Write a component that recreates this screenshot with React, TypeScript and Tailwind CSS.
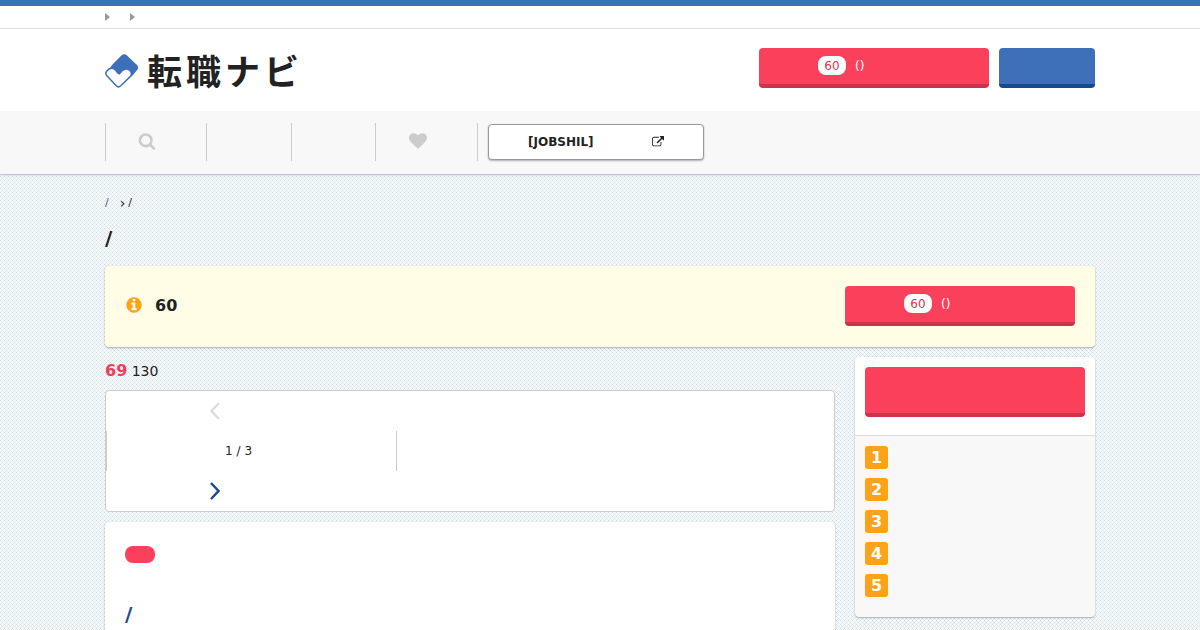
import type { ReactNode } from "react";

function Glyph({ d, className }: { d: string; className: string }) {
  return (
    <svg viewBox="0 0 1792 1792" className={className} fill="currentColor" aria-hidden="true">
      <path d={d} />
    </svg>
  );
}

const SEARCH =
  "M1216 832q0-185-131.5-316.5t-316.5-131.5-316.5 131.5-131.5 316.5 131.5 316.5 316.5 131.5 316.5-131.5 131.5-316.5zm512 832q0 52-38 90t-90 38q-54 0-90-38l-343-342q-179 124-399 124-143 0-273.5-55.5t-225-150-150-225-55.5-273.5 55.5-273.5 150-225 225-150 273.5-55.5 273.5 55.5 225 150 150 225 55.5 273.5q0 220-124 399l343 343q37 37 37 90z";
const HEART =
  "M896 1664q-26 0-44-18l-624-602q-10-8-27.5-26t-55.5-65.5-68-97.5-53.5-121-23.5-138q0-220 127-344t351-124q62 0 126.5 21.5t120 58 95.5 68.5 76 68q36-36 76-68t95.5-68.5 120-58 126.5-21.5q224 0 351 124t127 344q0 221-229 450l-623 600q-18 18-44 18z";
const EXTERNAL =
  "M1408 928v320q0 119-84.5 203.5t-203.5 84.5h-832q-119 0-203.5-84.5t-84.5-203.5v-832q0-119 84.5-203.5t203.5-84.5h704q14 0 23 9t9 23v64q0 14-9 23t-23 9h-704q-66 0-113 47t-47 113v832q0 66 47 113t113 47h832q66 0 113-47t47-113v-320q0-14 9-23t23-9h64q14 0 23 9t9 23zm384-864v512q0 26-19 45t-45 19-45-19l-176-176-652 652q-10 10-23 10t-23-10l-114-114q-10-10-10-23t10-23l652-652-176-176q-19-19-19-45t19-45 45-19h512q26 0 45 19t19 45z";
const INFO =
  "M1152 1376v-160q0-14-9-23t-23-9h-96v-512q0-14-9-23t-23-9h-320q-14 0-23 9t-9 23v160q0 14 9 23t23 9h96v320h-96q-14 0-23 9t-9 23v160q0 14 9 23t23 9h448q14 0 23-9t9-23zm-128-896v-160q0-14-9-23t-23-9h-192q-14 0-23 9t-9 23v160q0 14 9 23t23 9h192q14 0 23-9t9-23zm640 416q0 209-103 385.5t-279.5 279.5-385.5 103-385.5-103-279.5-279.5-103-385.5 103-385.5 279.5-279.5 385.5-103 385.5 103 279.5 279.5 103 385.5z";

function Container({ children, className = "" }: { children: ReactNode; className?: string }) {
  return <div className={`mx-auto w-full max-w-[990px] ${className}`}>{children}</div>;
}

function Caret() {
  return (
    <svg viewBox="0 0 5 8" className="h-2 w-[5px]" fill="#999" aria-hidden="true">
      <path d="M0 0 5 4 0 8z" />
    </svg>
  );
}

function RegisterButton() {
  return (
    <a
      href="#register"
      aria-label="会員登録"
      className="flex h-10 w-[230px] items-start rounded border-b-4 border-[#cb344c] bg-[#fb405b] pt-2 pl-[59px] text-xs text-white"
    >
      <span className="w-7 rounded-lg bg-white pt-px text-center leading-[18px] text-[#d5364e]">60</span>
      <span className="ml-[9px] pt-px leading-[18px]">()</span>
    </a>
  );
}

function LogoMark() {
  return (
    <svg viewBox="0 0 34 34" className="size-[34px]" aria-hidden="true">
      <path
        d="M16.4 1.6Q19.2-.9 22 1.6L32 11Q34.2 13.6 32.2 16L26.6 22.5 14 20 4.6 14.4 7 11z"
        fill="#3e70b9"
      />
      <path
        d="M1.7 17.3Q-.1 19.3 1.7 21.6L11.2 31.8Q13.5 33.9 15.8 31.8L25.4 22.4Q27.4 19.7 25.4 17Q23 14.3 19.6 15.4Q16.6 16.6 14.4 19.9Q12.3 19.2 11.4 17.2Q9.8 14.4 6.8 14Q4 14.4 1.7 17.3z"
        fill="#fff"
        stroke="#3e70b9"
        strokeWidth="1.5"
      />
    </svg>
  );
}

function Angle({ d, className }: { d: string; className: string }) {
  return (
    <svg viewBox="0 0 10 18" className={className} fill="none" stroke="currentColor" strokeWidth="2.4" aria-hidden="true">
      <path d={d} />
    </svg>
  );
}

export default function App() {
  return (
    <div className="min-h-screen bg-[#f7fafc] bg-[conic-gradient(from_270deg_at_1px_1px,#cbd9e2_90deg,transparent_0),conic-gradient(from_270deg_at_1px_1px,#d3e0e8_90deg,transparent_0),conic-gradient(from_270deg_at_1px_1px,#e3ecf2_90deg,transparent_0)] bg-[length:4px_4px,4px_4px,2px_2px] bg-[position:0_0,2px_2px,1px_1px] font-['DejaVu_Sans','Noto_Sans_CJK_JP',sans-serif] text-[#222]">
      <header className="border-b border-[#b9c5dc] bg-white shadow-[0_1px_2px_rgba(0,0,0,0.08)]">
        <div className="border-t-[6px] border-b border-t-[#3e70b9] border-b-[#ddd]">
          <Container className="flex h-[22px] items-center gap-5">
            <Caret />
            <Caret />
          </Container>
        </div>
        <Container className="flex h-[82px] items-start justify-between">
          <a href="#home" className="flex items-start pt-[25px]">
            <LogoMark />
            <span className="ml-2 flex gap-1 font-['Noto_Sans_CJK_JP',sans-serif] text-[35px] leading-8 font-bold">
              <span>転</span>
              <span>職</span>
              <span>ナ</span>
              <span>ビ</span>
            </span>
          </a>
          <div className="flex gap-2.5 pt-[19px]">
            <RegisterButton />
            <a
              href="#login"
              aria-label="ログイン"
              className="h-10 w-24 rounded border-b-4 border-[#174a8c] bg-[#3e70b9]"
            />
          </div>
        </Container>
        <nav className="bg-[#f8f8f8]">
          <Container className="flex h-[63px] items-start pt-3">
            <ul className="flex h-[38px] border-l border-[#ccc] text-[#ccc]">
              <li className="w-[101px] border-r border-[#ccc]">
                <a href="#search" aria-label="検索" className="flex pt-[9px] pl-8">
                  <Glyph d={SEARCH} className="size-[18px]" />
                </a>
              </li>
              <li className="w-[85px] border-r border-[#ccc]" />
              <li className="w-[84px] border-r border-[#ccc]" />
              <li className="w-[102px] border-r border-[#ccc]">
                <a href="#keep" aria-label="お気に入り" className="flex pt-[9px] pl-[33px]">
                  <Glyph d={HEART} className="size-[18px]" />
                </a>
              </li>
            </ul>
            <a
              href="#jobshil"
              className="mt-px ml-2.5 flex h-9 w-[216px] items-center rounded border border-[#999] bg-white pl-[39px] text-xs font-bold shadow-[0_1px_2px_rgba(0,0,0,0.3)]"
            >
              [JOBSHIL]
              <Glyph d={EXTERNAL} className="ml-[58px] size-3" />
            </a>
          </Container>
        </nav>
      </header>

      <main>
        <Container>
          <nav className="flex items-center pt-5 text-[11px] leading-4">
            <a href="#top" className="text-[#4a5a80]">/</a>
            <span className="ml-[11px] text-sm leading-[14px]">›</span>
            <span className="ml-[3px]">/</span>
          </nav>
          <h1 className="mt-[13px] text-xl leading-7 font-bold">/</h1>

          <section className="mt-3.5 flex items-center justify-between rounded bg-[#fffde5] px-5 pt-5 pb-[21px] shadow-[0_1px_2px_rgba(0,0,0,0.3)]">
            <div className="flex items-center gap-3 text-base leading-5 font-bold">
              <span className="pb-0.5 text-[#fda31a]">
                <Glyph d={INFO} className="size-[18px]" />
              </span>
              <p>60</p>
            </div>
            <RegisterButton />
          </section>

          <div className="mt-2.5 flex items-start gap-5">
            <div className="min-w-0 flex-1">
              <p className="text-sm leading-7">
                <strong className="text-base leading-7 text-[#ee3e5b]">69</strong> 130
              </p>
              <div className="mt-[5px] rounded border border-[#ccc] bg-white text-xs">
                <div className="flex h-10 w-[30%] items-center justify-center">
                  <Angle d="M9 1 1.5 9 9 17" className="h-[18px] w-2.5 text-[#ddd]" />
                </div>
                <p className="flex h-10 w-2/5 items-center justify-center border-x border-[#ccc] pr-[26px]">1 / 3</p>
                <a href="#next" aria-label="次へ" className="flex h-10 w-[30%] items-center justify-center text-[#174a8c]">
                  <Angle d="M1 1 8.5 9 1 17" className="h-[18px] w-2.5" />
                </a>
              </div>
              <article className="mt-2.5 rounded bg-white px-5 pt-6 pb-5 shadow-[0_1px_2px_rgba(0,0,0,0.3)]">
                <span className="block h-[17px] w-[30px] rounded-lg bg-[#fb405b]" />
                <h2 className="mt-[37px] text-xl leading-7 font-bold">
                  <a href="#job" className="text-[#174a8c]">/</a>
                </h2>
              </article>
            </div>

            <aside className="w-60 overflow-hidden rounded bg-[#f8f8f8] shadow-[0_1px_2px_rgba(0,0,0,0.3)]">
              <div className="border-b border-[#ddd] bg-white px-2.5 pt-2.5 pb-[18px]">
                <a
                  href="#register"
                  aria-label="無料登録"
                  className="block h-[50px] rounded border-b-4 border-[#cb344c] bg-[#fb405b]"
                />
              </div>
              <ol className="flex flex-col gap-[9px] px-2.5 pt-2.5 pb-5 text-base font-bold text-white">
                {[1, 2, 3, 4, 5].map((n) => (
                  <li key={n} className="size-[23px] rounded-[3px] bg-[#fda31a] text-center leading-[23px]">
                    {n}
                  </li>
                ))}
              </ol>
            </aside>
          </div>
        </Container>
      </main>
    </div>
  );
}
